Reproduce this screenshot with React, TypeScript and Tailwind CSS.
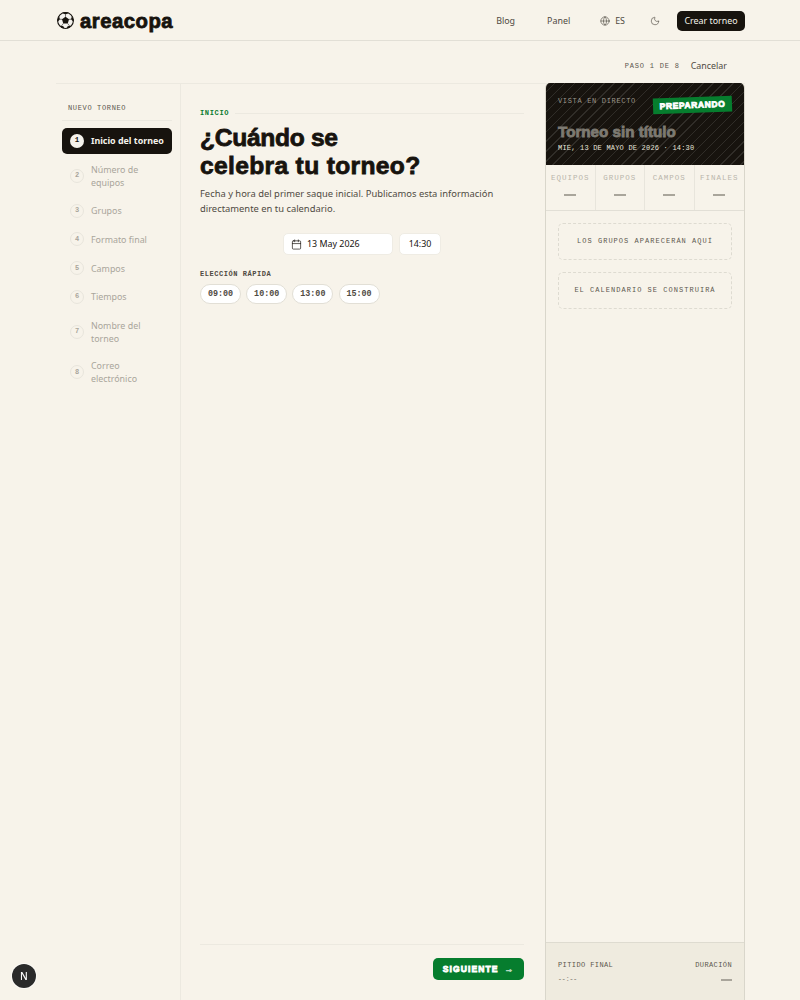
import React from "react";
import { Calendar, Globe, Moon } from "lucide-react";

const mono = "font-['Liberation_Mono',monospace]";
const display = "font-['Liberation_Sans',sans-serif] font-bold [-webkit-text-stroke:0.8px_currentColor]";

function Ball() {
  return (
    <svg width="17" height="17" viewBox="0 0 24 24" aria-hidden="true">
      <circle cx="12" cy="12" r="11.2" fill="#f4f2ee" stroke="#17130e" strokeWidth="1.5" />
      <polygon points="12,6.8 17,10.4 15.1,16.2 8.9,16.2 7,10.4" fill="#17130e" />
      <path d="M7.5 1.5 12 3.4 16.5 1.5 15 0.5H9Z" fill="#17130e" />
      <path d="M21.2 5.5 19.8 10.2 22.9 13.6 23.6 11Z" fill="#17130e" />
      <path d="M2.8 5.5 4.2 10.2 1.1 13.6 0.4 11Z" fill="#17130e" />
      <path d="M4.5 19 9 20.2 10.8 23.6 6 22.4Z" fill="#17130e" />
      <path d="M19.5 19 15 20.2 13.2 23.6 18 22.4Z" fill="#17130e" />
      <path d="M12 6.8V3.4M17 10.4 19.8 10.2M15.1 16.2 17.5 19.5M8.9 16.2 6.5 19.5M7 10.4 4.2 10.2" stroke="#17130e" strokeWidth="0.8" />
    </svg>
  );
}

const steps: { n: number; label: string }[] = [
  { n: 2, label: "Número de equipos" },
  { n: 3, label: "Grupos" },
  { n: 4, label: "Formato final" },
  { n: 5, label: "Campos" },
  { n: 6, label: "Tiempos" },
  { n: 7, label: "Nombre del torneo" },
  { n: 8, label: "Correo electrónico" },
];

export default function App() {
  return (
    <div className="flex h-[1000px] w-[800px] flex-col overflow-hidden bg-[#f7f3ea] font-['Noto_Sans',sans-serif] text-[#17130e]">
      <header className="flex h-[41px] shrink-0 items-center justify-between border-b border-[#e2dfd6] pl-[57px] pr-[55px] pt-[2px]">
        <div className="flex items-center gap-[6px]">
          <Ball />
          <span className={`${display} text-[20.3px] leading-none tracking-[0.5px]`}>areacopa</span>
        </div>
        <nav className="flex items-center text-[8.9px] text-[#4f4a42]">
          <span className="mr-[32px]">Blog</span>
          <span className="mr-[30px]">Panel</span>
          <span className="mr-[25px] flex items-center gap-[5px]">
            <Globe size={10} strokeWidth={1.5} />
            ES
          </span>
          <Moon size={10} strokeWidth={1.5} className="mr-[17px]" />
          <span className="flex h-[20px] w-[68px] items-center justify-center rounded-[5px] bg-[#17130e] text-[#f6f3ec]">Crear torneo</span>
        </nav>
      </header>

      <div className="flex h-[42px] shrink-0 items-center justify-end pr-[73px] pt-[8px]">
        <span className={`${mono} mr-[11px] text-[7px] tracking-[0.8px] text-[#5c574e]`}>PASO 1 DE 8</span>
        <span className="text-[8.9px] text-[#4f4a42]">Cancelar</span>
      </div>

      <div className="flex min-h-0 flex-1 pl-[56px] pr-[55px]">
        <div className="flex min-w-0 flex-1 border-t border-[#ece9e0]">
          <aside className="w-[125px] shrink-0 border-r border-[#ece9e0] pl-[6px] pr-[8px] pt-[20px]">
            <div className="border-b border-[#ece9e0] pb-[7px] pl-[6px]">
              <span className={`${mono} block text-[7px] leading-[9px] tracking-[0.65px] text-[#5c574e]`}>NUEVO TORNEO</span>
            </div>
            <div className="mt-[7px] flex flex-col gap-[2.75px]">
              <div className="flex h-[26px] items-center gap-[7px] whitespace-nowrap rounded-[5px] bg-[#17130e] pl-[8px] text-[8.9px] font-bold text-[#f6f3ec]">
                <span className={`${mono} flex h-[14px] w-[14px] shrink-0 items-center justify-center rounded-full bg-[#f6f3ec] text-[7.5px] font-bold text-[#17130e]`}>1</span>
                Inicio del torneo
              </div>
              {steps.map((s) => (
                <div key={s.n} className="flex items-center gap-[7px] py-[6px] pl-[8px] text-[8.9px] leading-[13px] text-[#a9a59b]">
                  <span className={`${mono} flex h-[14px] w-[14px] shrink-0 items-center justify-center rounded-full border border-[#e8e5dc] text-[7px] font-bold text-[#a9a59b]`}>{s.n}</span>
                  <span className="w-[66px]">{s.label}</span>
                </div>
              ))}
            </div>
          </aside>

          <main className="flex min-w-0 flex-1 flex-col pl-[19px] pr-[21px] pt-[25px]">
            <div className="flex items-center gap-[6px]">
              <span className={`${mono} text-[7px] font-bold leading-[9px] tracking-[0.65px] text-[#0a7a30]`}>INICIO</span>
              <span className="h-px flex-1 bg-[#ece9e0]" />
            </div>
            <h1 className={`${display} mt-[6px] text-[24.6px] leading-[28px]`}>
              <span className="tracking-[-0.3px]">¿Cuándo se</span>
              <br />
              <span className="tracking-[0.33px]">celebra tu torneo?</span>
            </h1>
            <p className="mt-[6px] text-[9.4px] leading-[15px] text-[#4f4a42]">
              Fecha y hora del primer saque inicial. Publicamos esta información directamente en tu calendario.
            </p>
            <div className="mt-[17px] flex justify-center gap-[6px]">
              <div className="flex h-[22px] w-[110px] items-center gap-[5px] rounded-[5px] border border-[#efece4] bg-white pl-[7px] text-[8.9px]">
                <Calendar size={11} strokeWidth={1.5} />
                13 May 2026
              </div>
              <div className="flex h-[22px] w-[42px] items-center justify-center rounded-[5px] border border-[#efece4] bg-white text-[8.9px]">14:30</div>
            </div>
            <div className={`${mono} mt-[15px] text-[7px] font-bold leading-[9px] tracking-[0.55px] text-[#4f4a42]`}>ELECCIÓN RÁPIDA</div>
            <div className="mt-[5px] flex gap-[5.2px]">
              {["09:00", "10:00", "13:00", "15:00"].map((t) => (
                <span key={t} className={`${mono} flex h-[20px] w-[41px] items-center justify-center rounded-full border border-[#e2dfd6] bg-white text-[8.4px] font-bold text-[#4f4a42]`}>{t}</span>
              ))}
            </div>
            <div className="mt-auto flex h-[56px] items-start justify-end border-t border-[#ece9e0] pt-[13px]">
              <span className={`flex h-[22px] w-[91px] items-center justify-center gap-[6px] rounded-[5px] bg-[#067d2e] text-[8.5px] tracking-[1.1px] text-white ${display} [-webkit-text-stroke:0.3px_currentColor]`}>
                SIGUIENTE <span className="font-normal opacity-70">→</span>
              </span>
            </div>
          </main>

          <aside className="-mt-px flex w-[200px] shrink-0 flex-col overflow-hidden rounded-t-[5px] border-x border-[#d9d6cb]">
            <div className="relative h-[82px] shrink-0 bg-[#17130e] bg-[repeating-linear-gradient(135deg,transparent_0,transparent_6px,rgba(255,255,255,0.11)_6px,rgba(255,255,255,0.11)_7px)] px-[12px] pt-[14px]">
              <div className={`${mono} text-[7px] leading-[9px] tracking-[0.67px] text-[#9b968b]`}>VISTA EN DIRECTO</div>
              <span className={`${display} absolute right-[12px] top-[14px] flex h-[16px] w-[79px] -rotate-2 items-center justify-center bg-[#067d2e] text-[8.5px] tracking-[0.6px] text-white [-webkit-text-stroke:0.3px_currentColor]`}>PREPARANDO</span>
              <div className={`${display} mt-[17px] text-[15.2px] leading-[17px] text-[#7d7a72]`}>Torneo sin título</div>
              <div className={`${mono} mt-[4px] text-[7px] leading-[9px] tracking-[0.2px] text-[#e6e3da]`}>MIÉ, 13 DE MAYO DE 2026 · 14:30</div>
            </div>
            <div className="grid h-[46px] shrink-0 grid-cols-4 border-b border-[#e2dfd6]">
              {["EQUIPOS", "GRUPOS", "CAMPOS", "FINALES"].map((l, i) => (
                <div key={l} className={`flex flex-col items-center pt-[9px] ${i < 3 ? "border-r border-[#e8e5dc]" : ""}`}>
                  <span className={`${mono} text-[7.5px] leading-[9px] tracking-[1px] text-[#b9b5ab]`}>{l}</span>
                  <span className="mt-[11px] h-[2px] w-[12px] bg-[#a9a59b]" />
                </div>
              ))}
            </div>
            <div className="flex flex-col gap-[12px] px-[12px] pt-[12px]">
              <div className={`${mono} flex h-[37px] items-center justify-center rounded-[5px] border border-dashed border-[#dedbd1] text-[7px] tracking-[1.03px] text-[#5c574e]`}>LOS GRUPOS APARECERÁN AQUÍ</div>
              <div className={`${mono} flex h-[37px] items-center justify-center rounded-[5px] border border-dashed border-[#dedbd1] text-[7px] tracking-[1.03px] text-[#5c574e]`}>EL CALENDARIO SE CONSTRUIRÁ</div>
            </div>
            <div className="mt-auto flex h-[58px] shrink-0 justify-between border-t border-[#dedbd0] bg-[#efebdf] px-[12px] pt-[18px]">
              <div>
                <div className={`${mono} text-[7px] leading-[9px] tracking-[0.4px] text-[#5c574e]`}>PITIDO FINAL</div>
                <div className={`${mono} mt-[5px] text-[6.4px] font-bold leading-[9px] text-[#9b968b]`}>--:--</div>
              </div>
              <div className="flex flex-col items-end">
                <div className={`${mono} text-[7px] leading-[9px] tracking-[0.4px] text-[#5c574e]`}>DURACIÓN</div>
                <span className="mt-[9px] h-[2px] w-[11px] bg-[#a9a59b]" />
              </div>
            </div>
          </aside>
        </div>
      </div>

      <div className="fixed left-[12px] top-[964px] flex h-[24px] w-[24px] items-center justify-center rounded-full bg-[#2a2a2a] text-[10px] font-medium text-white shadow-[0_0_0_1px_rgba(255,255,255,0.6)]">
        N
      </div>
    </div>
  );
}
